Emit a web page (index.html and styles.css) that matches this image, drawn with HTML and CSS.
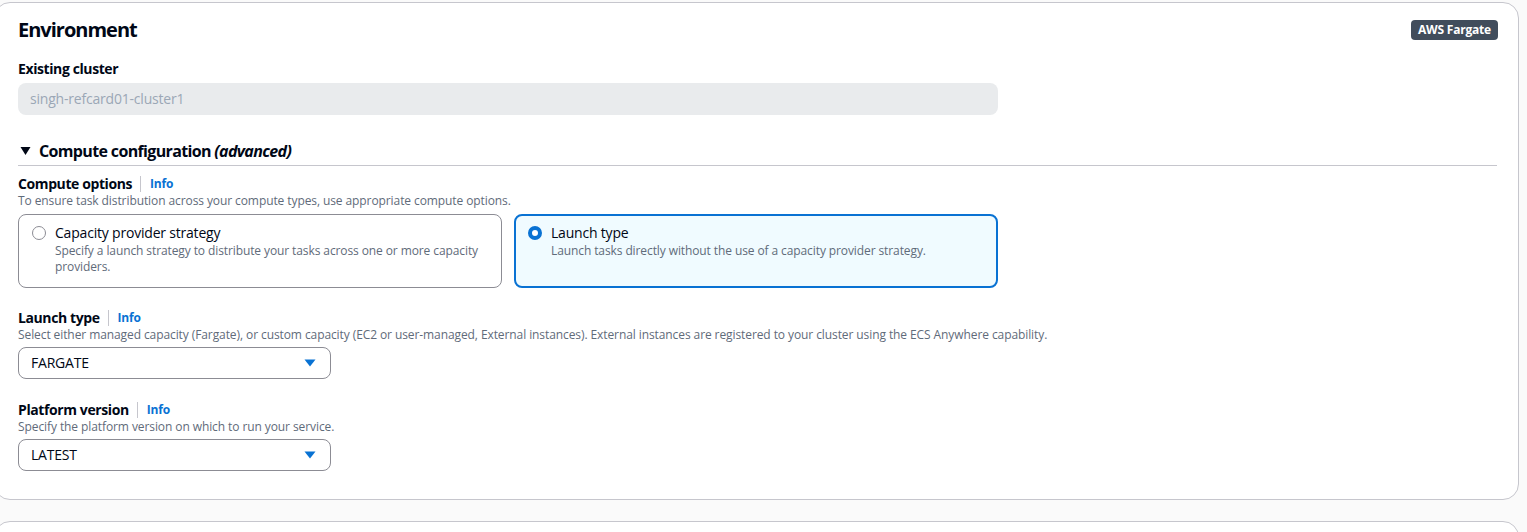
FILE: index.html
```html
<!DOCTYPE html>
<html lang="en">
<head>
<meta charset="utf-8">
<title>Environment</title>
<link rel="stylesheet" href="styles.css">
</head>
<body>
<div class="page">
  <section class="card">
    <div class="card-header">
      <h2 class="card-title">Environment</h2>
      <span class="badge">AWS Fargate</span>
    </div>

    <div class="field field-first">
      <div class="label-row"><span class="label">Existing cluster</span></div>
      <div class="input-disabled">singh-refcard01-cluster1</div>
    </div>

    <div class="expander">
      <div class="expander-head">
        <svg class="expander-caret" width="11" height="10" viewBox="0 0 11 10"><polygon points="0.5,1 10.5,1 5.5,9" fill="#000716"/></svg>
        <span class="expander-title">Compute configuration <em>(advanced)</em></span>
      </div>

      <div class="field field-compute">
        <div class="label-row"><span class="label">Compute options</span><span class="sep"></span><a class="info">Info</a></div>
        <div class="desc">To ensure task distribution across your compute types, use appropriate compute options.</div>
        <div class="tiles">
          <div class="tile">
            <span class="radio"></span>
            <div class="tile-text">
              <div class="tile-title">Capacity provider strategy</div>
              <div class="tile-desc">Specify a launch strategy to distribute your tasks across one or more capacity providers.</div>
            </div>
          </div>
          <div class="tile tile-selected">
            <span class="radio radio-checked"></span>
            <div class="tile-text">
              <div class="tile-title">Launch type</div>
              <div class="tile-desc">Launch tasks directly without the use of a capacity provider strategy.</div>
            </div>
          </div>
        </div>
      </div>

      <div class="field field-spaced">
        <div class="label-row"><span class="label">Launch type</span><span class="sep"></span><a class="info">Info</a></div>
        <div class="desc">Select either managed capacity (Fargate), or custom capacity (EC2 or user-managed, External instances). External instances are registered to your cluster using the ECS Anywhere capability.</div>
        <div class="select">
          <span class="select-value">FARGATE</span>
          <svg class="select-caret" width="12" height="8" viewBox="0 0 12 8"><polygon points="0.5,0.5 11.5,0.5 6,7.5" fill="#0972d3"/></svg>
        </div>
      </div>

      <div class="field field-spaced field-last">
        <div class="label-row"><span class="label">Platform version</span><span class="sep"></span><a class="info">Info</a></div>
        <div class="desc">Specify the platform version on which to run your service.</div>
        <div class="select">
          <span class="select-value">LATEST</span>
          <svg class="select-caret" width="12" height="8" viewBox="0 0 12 8"><polygon points="0.5,0.5 11.5,0.5 6,7.5" fill="#0972d3"/></svg>
        </div>
      </div>
    </div>
  </section>
  <section class="card card-next"></section>
</div>
</body>
</html>
```

FILE: styles.css
```css
* { box-sizing: border-box; }
html, body { margin: 0; padding: 0; }
body {
  background: #fafafa;
  font-family: "Open Sans", "Noto Sans", "Liberation Sans", sans-serif;
  color: #000716;
  overflow: hidden;
}
.page {
  padding-top: 2px;
  margin-left: -6px;
  width: 1525px;
}
.card {
  background: #ffffff;
  border: 1px solid #c6c6cd;
  border-radius: 16px;
  padding: 15px 20px 28px 23px;
}
.card-next {
  margin-top: 21px;
  height: 60px;
}
.card-header {
  display: flex;
  justify-content: space-between;
  align-items: flex-start;
}
.card-title {
  margin: 0;
  font-size: 20px;
  line-height: 24px;
  font-weight: 700;
  letter-spacing: -1px;
}
.badge {
  margin-top: 2px;
  background: #414d5c;
  color: #ffffff;
  font-size: 12px;
  font-weight: 700;
  line-height: 20px;
  padding: 0 7px;
  border-radius: 4px;
  letter-spacing: -0.2px;
}
.field { max-width: 980px; }
.field-first { margin-top: 18px; }
.label-row {
  display: flex;
  align-items: center;
  height: 18px;
}
.label {
  font-size: 14px;
  font-weight: 700;
  line-height: 18px;
  letter-spacing: -0.4px;
}
.sep {
  width: 1px;
  height: 16px;
  background: #c6c6cd;
  margin: 0 9px 0 8px;
}
.info {
  color: #0972d3;
  font-size: 12px;
  font-weight: 700;
  line-height: 18px;
  letter-spacing: -0.2px;
}
.desc {
  font-size: 12px;
  line-height: 16px;
  color: #5f6b7a;
  margin-top: 0;
  white-space: nowrap;
  letter-spacing: -0.09px;
}
.input-disabled {
  margin-top: 5px;
  height: 32px;
  background: #e9ebed;
  border-radius: 8px;
  color: #9ba7b6;
  font-size: 14px;
  line-height: 32px;
  padding: 0 12px;
  letter-spacing: -0.2px;
}
.expander { margin-top: 25px; }
.expander-head {
  display: flex;
  align-items: center;
  height: 22px;
  border-bottom: 1px solid #c6c6cd;
  box-sizing: content-box;
  padding-bottom: 3px;
  max-width: 1479px;
}
.expander-caret { margin: 0 8px 0 2px; }
.expander-title {
  font-size: 16px;
  font-weight: 700;
  line-height: 22px;
  letter-spacing: -0.65px;
}
.expander-title em { font-style: italic; }
.field-compute { margin-top: 9px; }
.field-spaced { margin-top: 21px; }
.field-last { margin-top: 22px; }
.tiles {
  margin-top: 5px;
  display: grid;
  grid-template-columns: 1fr 1fr;
  gap: 12px;
}
.tile {
  display: flex;
  align-items: flex-start;
  border: 1px solid #8c8c94;
  border-radius: 8px;
  padding: 8px 13px 11px 13px;
  min-height: 74px;
  background: #ffffff;
}
.tile-selected {
  border: 2px solid #0972d3;
  background: #f0fbff;
  padding: 7px 12px 10px 12px;
}
.radio {
  flex: none;
  width: 14px;
  height: 14px;
  margin-top: 3px;
  margin-right: 9px;
  border-radius: 50%;
  border: 1.5px solid #8c8c94;
  background: #ffffff;
}
.radio-checked {
  border: 4px solid #0972d3;
}
.tile-title {
  font-size: 14px;
  line-height: 20px;
  letter-spacing: -0.2px;
}
.tile-desc {
  font-size: 12px;
  line-height: 16px;
  color: #5f6b7a;
  letter-spacing: -0.1px;
}
.select {
  margin-top: 4px;
  width: 313px;
  height: 32px;
  border: 1px solid #8c8c94;
  border-radius: 8px;
  display: flex;
  align-items: center;
  justify-content: space-between;
  padding: 0 14px 0 12px;
}
.select-value {
  font-size: 14px;
  line-height: 20px;
  letter-spacing: -0.2px;
}
.select-caret { display: block; }
```
